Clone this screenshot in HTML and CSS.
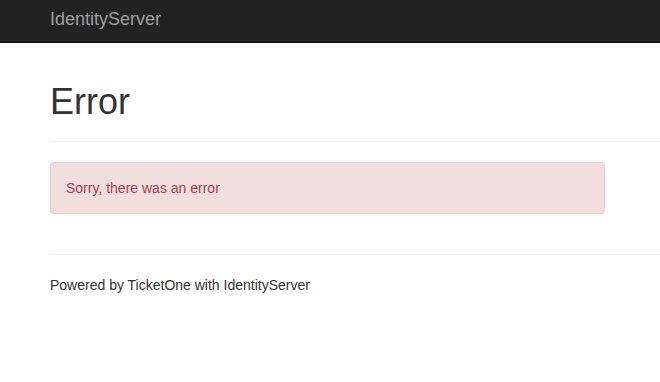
FILE: index.html
```html
<!DOCTYPE html>
<html lang="en">
<head>
<meta charset="utf-8">
<title>IdentityServer</title>
<link rel="stylesheet" href="styles.css">
</head>
<body>
<nav class="navbar">
  <a class="navbar-brand" href="#">IdentityServer</a>
</nav>
<main class="main">
  <div class="page-header">
    <h1>Error</h1>
  </div>
  <div class="alert">Sorry, there was an error</div>
  <hr class="divider">
  <footer class="footer">Powered by TicketOne with IdentityServer</footer>
</main>
</body>
</html>
```

FILE: styles.css
```css
html, body {
  margin: 0;
  padding: 0;
  background: #fff;
}
body {
  font-family: "Liberation Sans", Arial, sans-serif;
  font-size: 14px;
  line-height: 20px;
  color: #333;
}
.navbar {
  box-sizing: border-box;
  height: 43px;
  background: #222;
  border-bottom: 1px solid #080808;
  display: flex;
  align-items: flex-start;
  padding: 9px 0 0 50px;
}
.navbar-brand {
  font-size: 18px;
  line-height: 20px;
  color: #9d9d9d;
  text-decoration: none;
}
.main {
  padding-left: 50px;
}
.page-header {
  margin-top: 39px;
  padding-bottom: 19px;
  border-bottom: 1px solid #eee;
}
.page-header h1 {
  margin: 0;
  font-size: 36px;
  font-weight: 500;
  line-height: 39.6px;
  color: #333;
}
.alert {
  box-sizing: border-box;
  width: 555px;
  margin-top: 20px;
  padding: 15px;
  border: 1px solid #ebccd1;
  border-radius: 4px;
  background: #f2dede;
  color: #a94442;
}
.divider {
  margin: 40px 0 20px;
  border: 0;
  border-top: 1px solid #eee;
}
.footer {
  color: #333;
}
```
